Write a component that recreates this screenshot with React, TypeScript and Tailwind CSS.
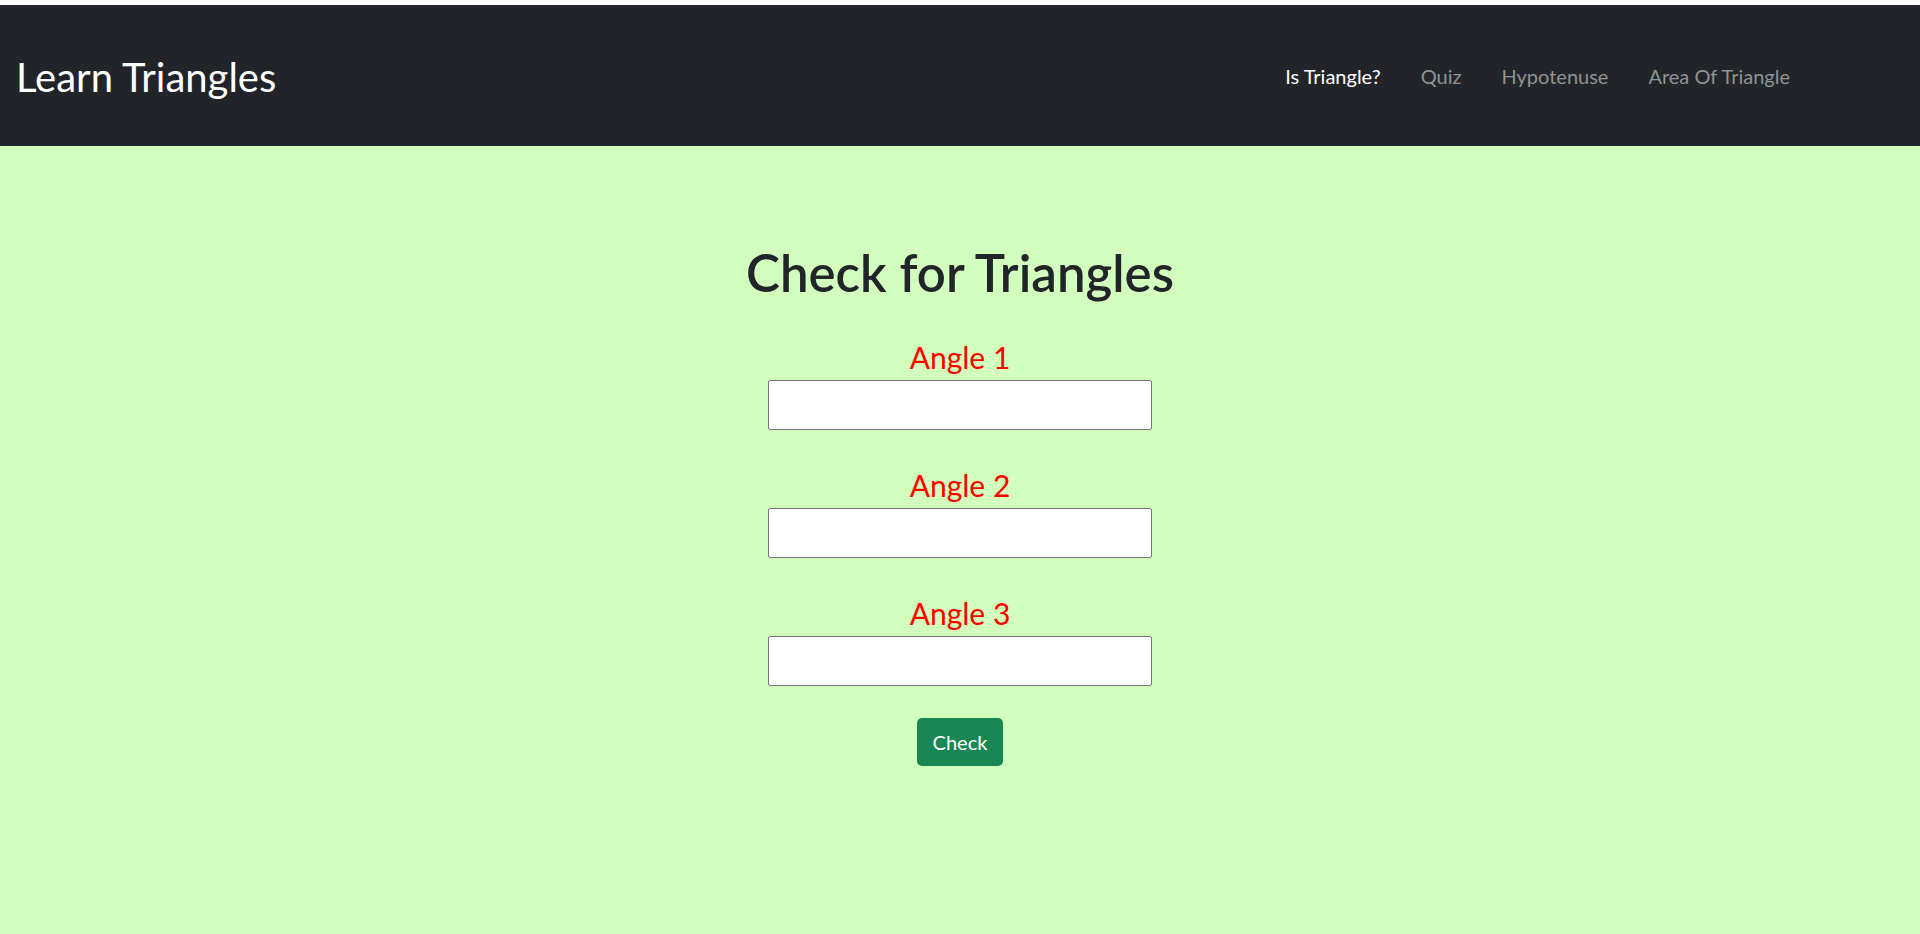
import { useState } from "react";

const links = [
    { label: "Is Triangle?", active: true },
    { label: "Quiz", active: false },
    { label: "Hypotenuse", active: false },
    { label: "Area Of Triangle", active: false },
];

const Navbar = () => {
    return (
        <nav className="flex items-center h-[141px] bg-[#212529] px-4">
            <a className="text-[40px] leading-none text-white mt-[3px]" href="#">
                Learn Triangles
            </a>
            <ul className="flex items-center ml-auto mr-[114px] gap-[40px] mt-[1px]">
                {links.map((link) => (
                    <li key={link.label}>
                        <a
                            href="#"
                            className={
                                link.active
                                    ? "text-[20px] text-white"
                                    : "text-[20px] text-[#909295]"
                            }
                        >
                            {link.label}
                        </a>
                    </li>
                ))}
            </ul>
        </nav>
    );
};

const AngleField = ({
    label,
    value,
    onChange,
}: {
    label: string;
    value: string;
    onChange: (v: string) => void;
}) => {
    return (
        <div className="flex flex-col items-center">
            <label className="text-[30px] leading-[36px] text-[#ff0000]">{label}</label>
            <input
                type="number"
                value={value}
                onChange={(e) => onChange(e.target.value)}
                className="w-[384px] h-[50px] mt-[5px] bg-white border border-[#767676] rounded-[2px] px-2 text-xl outline-none"
            />
        </div>
    );
};

export default function App() {
    const [angles, setAngles] = useState(["", "", ""]);

    const setAngle = (i: number, v: string) => {
        const next = [...angles];
        next[i] = v;
        setAngles(next);
    };

    return (
        <div
            className="min-h-[934px] flex flex-col bg-white pt-[5px] text-[#212529]"
            style={{ fontFamily: "Lato, 'Noto Sans', sans-serif" }}
        >
            <Navbar />
            <main className="flex-1 bg-[#d2ffbe] flex flex-col items-center pt-[97px]">
                <h1 className="text-[51px] leading-[60px] font-semibold mb-[36px]">
                    Check for Triangles
                </h1>
                <div className="flex flex-col gap-[37px]">
                    {angles.map((a, i) => (
                        <AngleField
                            key={i}
                            label={`Angle ${i + 1}`}
                            value={a}
                            onChange={(v) => setAngle(i, v)}
                        />
                    ))}
                </div>
                <button className="mt-[32px] h-[48px] px-4 bg-[#198754] text-white text-xl rounded-[5px]">
                    Check
                </button>
            </main>
        </div>
    );
}
